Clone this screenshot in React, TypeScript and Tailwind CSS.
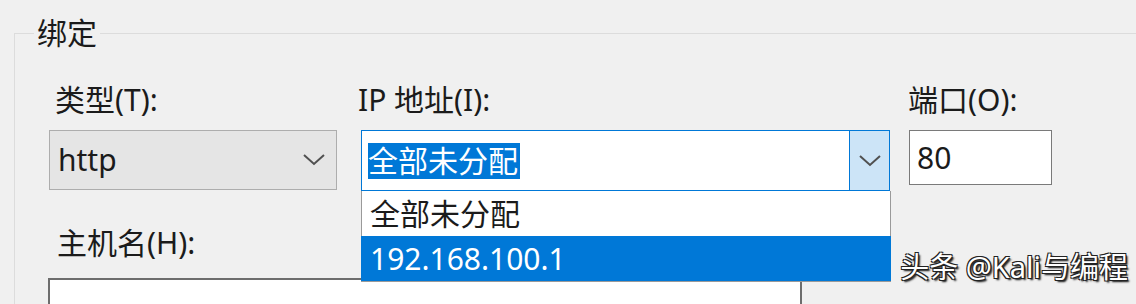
import React from 'react';

const font = "font-['Noto_Sans','Noto_Sans_CJK_SC',sans-serif]";

function Chevron({ className = '' }: { className?: string }) {
  return (
    <svg width="24" height="14" viewBox="0 0 24 14" className={className}>
      <path d="M2 2 L12 11 L22 2" fill="none" stroke="#505050" strokeWidth="2" />
    </svg>
  );
}

export default function App() {
  return (
    <div className={`${font} relative h-[304px] w-[1136px] overflow-hidden bg-[#f0f0f0] text-[30px] text-[#1b1b1b]`}>
      <fieldset className="ml-[14px] mt-[15px] h-[400px] border border-r-0 border-[#dcdcdc] p-0">
        <legend className="ml-[19px] px-[3px] leading-[36px]">绑定</legend>

        <div className="pl-[34px] pt-[31px]">
          <div className="flex items-start">
            <div className="flex w-[288px] flex-col">
              <label className="pl-[6px] leading-[36px]">类型(T):</label>
              <div className="mt-[12px] flex h-[60px] items-center justify-between border border-[#adadad] bg-[#e5e5e5] pl-[8px] pr-[10px]">
                <span className="leading-none">http</span>
                <Chevron />
              </div>
            </div>

            <div className="ml-[24px] flex w-[529px] flex-col">
              <label className="-ml-[3px] leading-[36px]">IP 地址(I):</label>
              <div className="relative mt-[12px]">
                <div className="flex h-[61px] border border-[#0078d7] bg-white">
                  <div className="flex flex-1 items-center pl-[6px]">
                    <span className="bg-[#0078d7] pr-[2px] leading-[36px] text-white">全部未分配</span>
                  </div>
                  <div className="flex w-[40px] items-center justify-center border-l border-[#0078d7] bg-[#cce4f7]">
                    <Chevron />
                  </div>
                </div>
                <ul className="absolute left-0 top-[61px] z-10 w-[530px] border border-[#9a9a9a] border-t-0 bg-white">
                  <li className="flex h-[45px] items-center pl-[8px]">全部未分配</li>
                  <li className="-mx-px flex h-[45px] items-center bg-[#0078d7] pl-[9px] text-white">192.168.100.1</li>
                </ul>
              </div>
            </div>

            <div className="ml-[19px] flex w-[143px] flex-col">
              <label className="-ml-[1px] leading-[36px]">端口(O):</label>
              <div className="mt-[12px] flex h-[55px] items-center border border-[#7a7a7a] bg-white pl-[7px]">
                <span className="leading-none">80</span>
              </div>
            </div>
          </div>

          <div className="mt-[34px] flex flex-col">
            <label className="pl-[8px] leading-[36px]">主机名(H):</label>
            <div className="-ml-[1px] mt-[17px] h-[60px] w-[754px] border-2 border-[#6d6d6d] bg-white" />
          </div>
        </div>
      </fieldset>

      <div className="absolute bottom-[17px] right-[8px] z-20 text-[29px] leading-[40px] text-white [text-shadow:1px_1px_0_#222,-1px_-1px_0_#222,1px_-1px_0_#222,-1px_1px_0_#222,2px_2px_2px_#000]">
        头条 @Kali与编程
      </div>
    </div>
  );
}
